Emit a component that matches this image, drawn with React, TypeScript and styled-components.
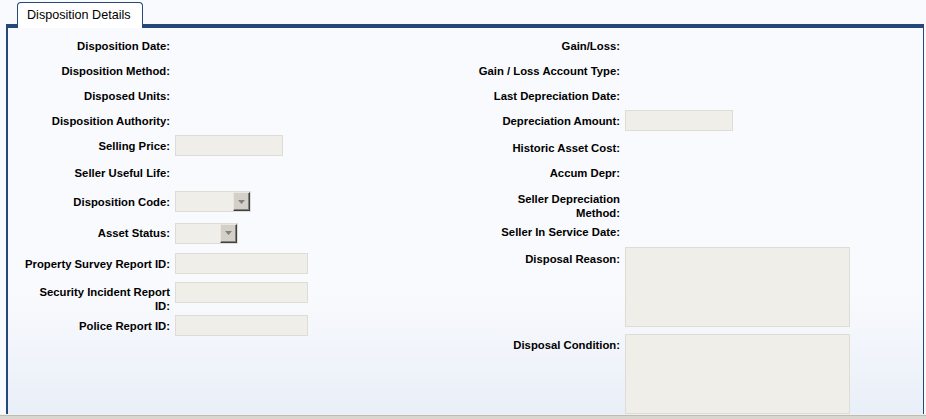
import React from "react";
import styled, { createGlobalStyle } from "styled-components";

const GlobalStyle = createGlobalStyle`
    html, body {
        margin: 0;
        padding: 0;
        background: #f9fafd;
    }
    body {
        font-family: "Liberation Sans", Arial, sans-serif;
    }
`;

const BLUE = "#26477a";

const Page = styled.div`
    width: 926px;
    height: 419px;
    display: flex;
    flex-direction: column;
    background: #f9fafd;
    overflow: hidden;
`;

const TabStrip = styled.div`
    height: 24px;
    margin: 0 2px 0 6px;
    padding-left: 11px;
    border-bottom: 4px solid ${BLUE};
    display: flex;
    align-items: flex-end;
`;

const Tab = styled.div`
    box-sizing: border-box;
    width: 126px;
    height: 26px;
    margin-bottom: -4px;
    padding: 5px 0 0 9px;
    border: 1px solid ${BLUE};
    border-bottom: none;
    border-radius: 4px 4px 0 0;
    background: #ffffff;
    color: #000;
    font-size: 12.6px;
    line-height: 14px;
    white-space: nowrap;
`;

const Panel = styled.div`
    box-sizing: border-box;
    height: 386px;
    margin: 0 2px 0 6px;
    padding-top: 5px;
    border-left: 2px solid ${BLUE};
    border-right: 1px solid ${BLUE};
    background: linear-gradient(to bottom, #f9fafd 0%, #f9fafd 68%, #e9eff8 100%);
    display: flex;
    overflow: hidden;
`;

const Section = styled.div`
    width: 450px;
    display: flex;
    flex-direction: column;
`;

const Row = styled.div<{ $h?: number; $top?: boolean }>`
    display: flex;
    align-items: ${(p) => (p.$top ? "flex-start" : "center")};
    height: ${(p) => (p.$h ? `${p.$h}px` : "auto")};
    flex-shrink: 0;
`;

const Label = styled.div<{ $pt?: number }>`
    width: 162px;
    flex-shrink: 0;
    padding-top: ${(p) => p.$pt ?? 0}px;
    text-align: right;
    font-size: 11.3px;
    font-weight: bold;
    line-height: 14px;
    color: #000;
    white-space: nowrap;
`;

const Field = styled.div<{ $mt?: number }>`
    margin-left: 5px;
    margin-top: ${(p) => p.$mt ?? 0}px;
    display: flex;
    align-self: ${(p) => (p.$mt ? "flex-start" : "auto")};
`;

const TextInput = styled.input<{ $w: number }>`
    box-sizing: border-box;
    width: ${(p) => p.$w}px;
    height: 21px;
    margin: 0;
    padding: 0 3px;
    border: 1px solid #dddcd6;
    background: #efeee9;
    outline: none;
`;

const TextArea = styled.textarea`
    box-sizing: border-box;
    width: 225px;
    height: 80px;
    margin: 0;
    padding: 2px;
    border: 1px solid #dddcd6;
    background: #efeee9;
    resize: none;
    outline: none;
`;

const SelectBox = styled.div<{ $w: number }>`
    box-sizing: border-box;
    width: ${(p) => p.$w}px;
    height: 21px;
    border: 1px solid #dddcd6;
    background: #efeee9;
    display: flex;
    justify-content: flex-end;
`;

const ArrowButton = styled.div`
    box-sizing: border-box;
    width: 17px;
    height: 19px;
    background: #d4d0c8;
    border-top: 1px solid #e9e7e2;
    border-left: 1px solid #e9e7e2;
    border-right: 1px solid #404040;
    border-bottom: 1px solid #404040;
    box-shadow: inset -1px -1px 0 #808080;
    display: flex;
    align-items: center;
    justify-content: center;
`;

const Footer = styled.div`
    flex: 1;
    border-top: 1px solid #f0f0ee;
    box-shadow: inset 0 1px 0 #bfbcb5;
    background: #d9d6cf;
`;

const Select = ({ width }: { width: number }) => (
    <SelectBox $w={width}>
        <ArrowButton>
            <svg width="7" height="4" viewBox="0 0 7 4">
                <path d="M0 0 H7 L3.5 4 Z" fill="#808080" />
            </svg>
        </ArrowButton>
    </SelectBox>
);

const App = () => {
    return (
        <Page>
            <GlobalStyle />
            <TabStrip>
                <Tab>Disposition Details</Tab>
            </TabStrip>
            <Panel>
                <Section>
                    <Row $h={25}><Label>Disposition Date:</Label></Row>
                    <Row $h={25}><Label>Disposition Method:</Label></Row>
                    <Row $h={25}><Label>Disposed Units:</Label></Row>
                    <Row $h={25}><Label>Disposition Authority:</Label></Row>
                    <Row $h={25}>
                        <Label>Selling Price:</Label>
                        <Field><TextInput $w={108} readOnly /></Field>
                    </Row>
                    <Row $h={30}><Label>Seller Useful Life:</Label></Row>
                    <Row $h={27}>
                        <Label>Disposition Code:</Label>
                        <Field><Select width={76} /></Field>
                    </Row>
                    <Row $h={36}>
                        <Label>Asset Status:</Label>
                        <Field><Select width={63} /></Field>
                    </Row>
                    <Row $h={25}>
                        <Label>Property Survey Report ID:</Label>
                        <Field><TextInput $w={133} readOnly /></Field>
                    </Row>
                    <Row $h={38}>
                        <Label $pt={8}>Security Incident Report<br />ID:</Label>
                        <Field $mt={6}><TextInput $w={133} readOnly /></Field>
                    </Row>
                    <Row $h={23}>
                        <Label>Police Report ID:</Label>
                        <Field><TextInput $w={133} readOnly /></Field>
                    </Row>
                </Section>
                <Section>
                    <Row $h={25}><Label>Gain/Loss:</Label></Row>
                    <Row $h={25}><Label>Gain / Loss Account Type:</Label></Row>
                    <Row $h={25}><Label>Last Depreciation Date:</Label></Row>
                    <Row $h={25}>
                        <Label>Depreciation Amount:</Label>
                        <Field><TextInput $w={108} readOnly /></Field>
                    </Row>
                    <Row $h={30}><Label>Historic Asset Cost:</Label></Row>
                    <Row $h={20}><Label>Accum Depr:</Label></Row>
                    <Row $h={38}>
                        <Label $pt={7}>Seller Depreciation<br />Method:</Label>
                    </Row>
                    <Row $h={22}><Label>Seller In Service Date:</Label></Row>
                    <Row $h={87} $top>
                        <Label $pt={9}>Disposal Reason:</Label>
                        <Field $mt={4}><TextArea readOnly /></Field>
                    </Row>
                    <Row $h={84} $top>
                        <Label $pt={8}>Disposal Condition:</Label>
                        <Field $mt={4}><TextArea readOnly /></Field>
                    </Row>
                </Section>
            </Panel>
            <Footer />
        </Page>
    );
};

export default App;
